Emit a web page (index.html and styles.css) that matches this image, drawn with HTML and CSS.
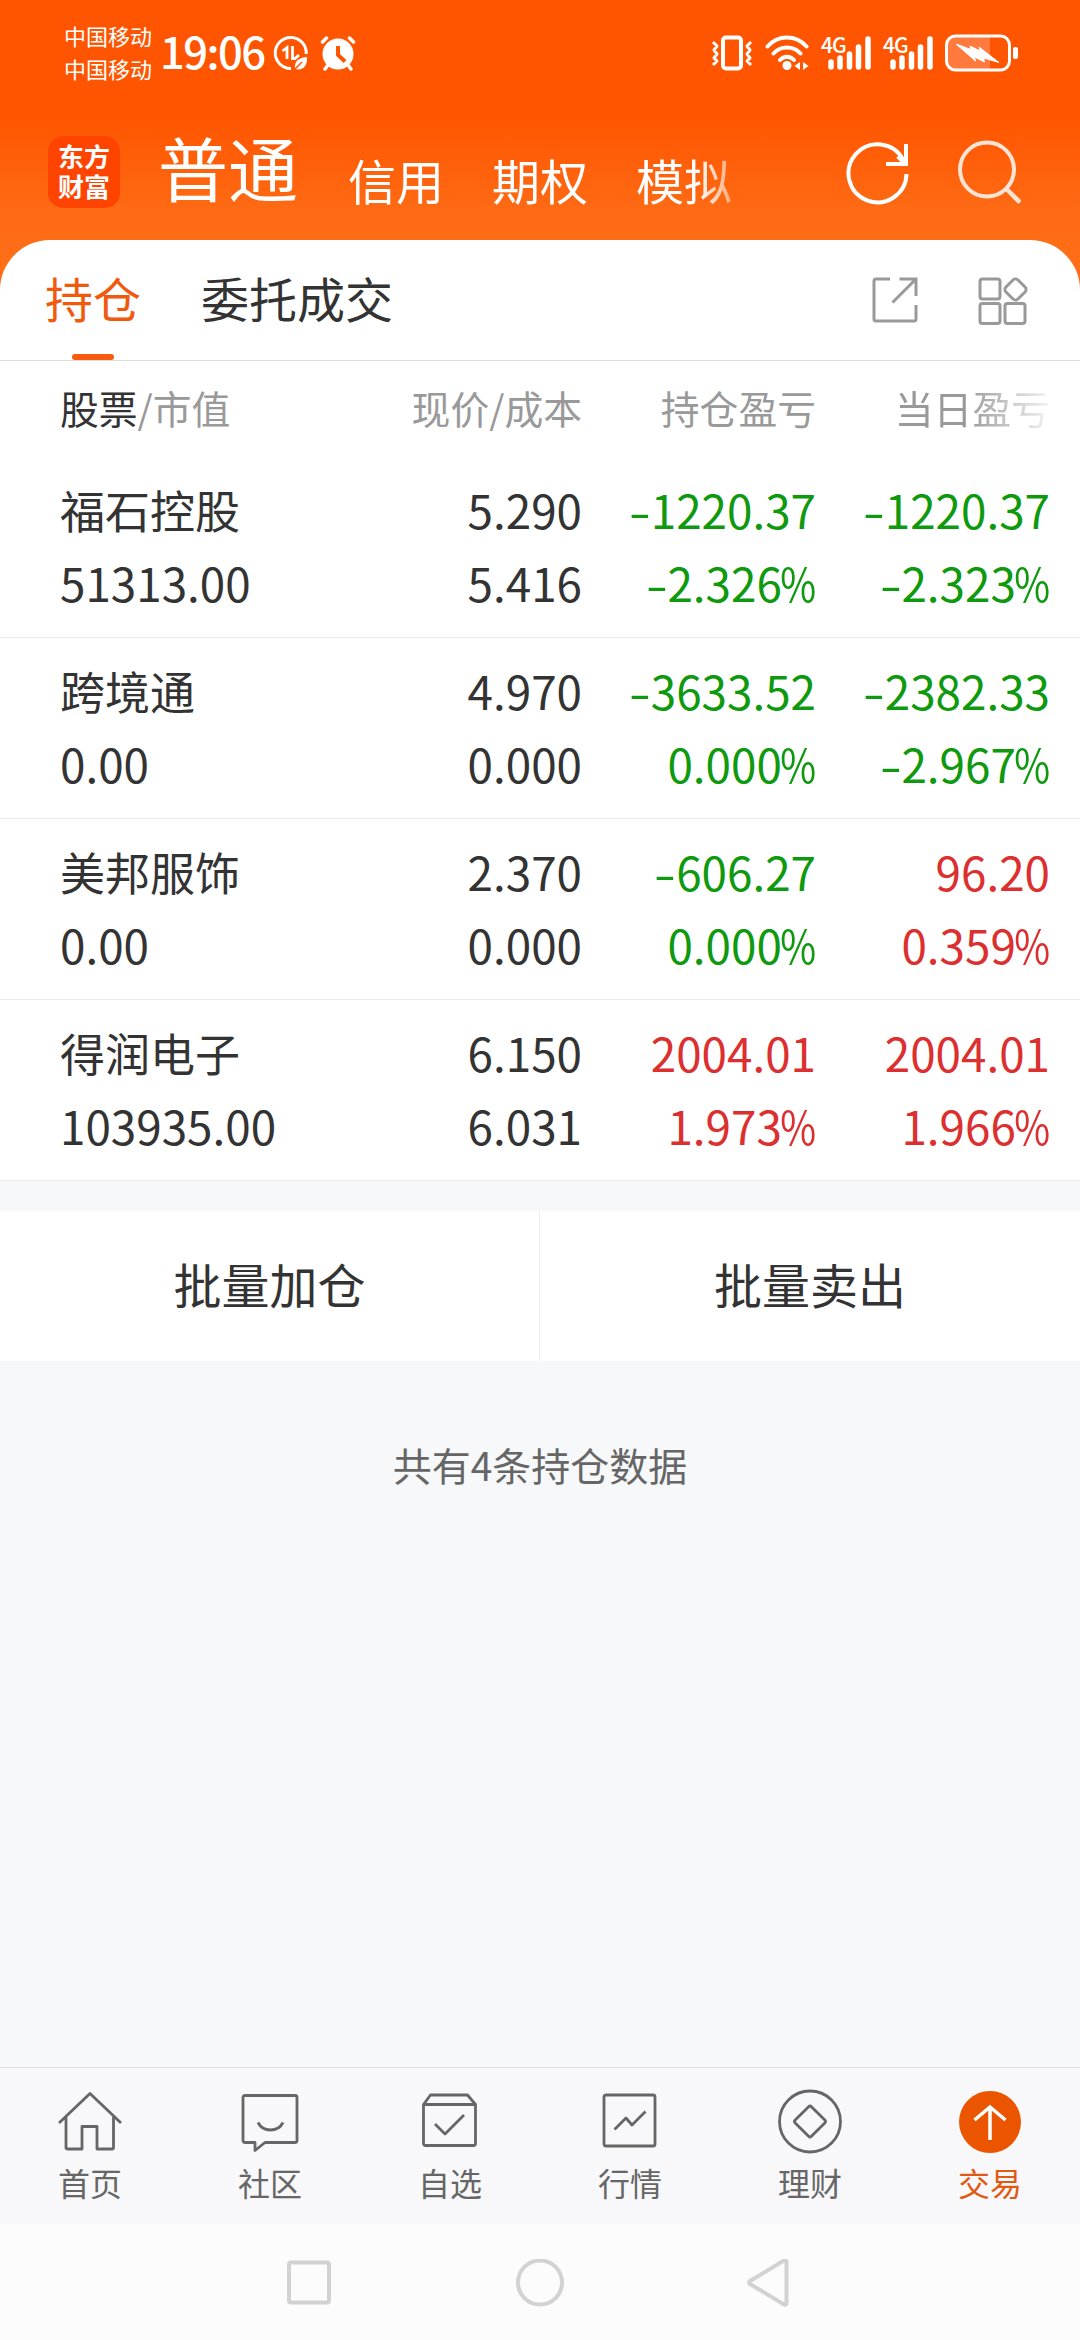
FILE: index.html
```html
<!DOCTYPE html>
<html lang="zh-CN">
<head>
    <meta charset="UTF-8">
    <meta name="viewport" content="width=device-width, initial-scale=1.0">
    <title>交易 - 持仓</title>
    <link rel="stylesheet" href="styles.css">
</head>
<body>
    <header class="top">
        <!-- 状态栏 -->
        <div class="status">
            <div class="carrier">
                <span>中国移动</span>
                <span>中国移动</span>
            </div>
            <span class="time">19:06</span>
            <svg class="s-data" width="36" height="36" viewBox="0 0 36 36" fill="none" stroke="#fff">
                <path d="M18 33.500A15.500 15.500 0 1 1 33.200 19" stroke-width="3"/>
                <path d="M9.500 16l4.500-3.500V24M19.500 11v12.500h2.500L26 20" stroke-width="2.800"/>
                <path d="M22 34c-1-8 4-11.500 12-12 .5 9-4 14-12 12z" fill="#fff" stroke="none"/>
                <path d="M21 35l8-8" stroke="#ff5500" stroke-width="1.500"/>
            </svg>
            <svg class="s-alarm" width="36" height="36" viewBox="0 0 36 36" fill="none" stroke="#fff" stroke-width="4" stroke-linecap="round">
                <circle cx="18" cy="19" r="15.500" fill="#fff" stroke="none"/>
                <path d="M2.500 7l4-4M33.500 7l-4-4M8 30l-3 4M28 30l3 4" stroke-width="3.500"/>
                <path d="M18 11v9l7 6.500" stroke="#ff5500" stroke-linecap="butt"/>
            </svg>
            <div class="status-right">
                <svg width="42" height="36" viewBox="0 0 42 36" fill="none" stroke="#fff" stroke-linejoin="round">
                    <rect x="12" y="2.500" width="18" height="31" rx="3" stroke-width="4"/>
                    <path d="M2 7l4 4-3 4 3 4-3 4 3 3-4 4M40 7l-4 4 3 4-3 4 3 4-3 3 4 4" stroke-width="3"/>
                </svg>
                <svg width="44" height="36" viewBox="0 0 44 36" fill="none" stroke="#fff" stroke-width="4" stroke-linecap="round">
                    <path d="M2.500 11.500C13-.500 31-.500 41.500 11.500M8.500 18.500c7-8 20-8 27 0M15 25c4-4.500 10-4.500 14 0"/>
                    <circle cx="22" cy="30.500" r="4.500" fill="#fff" stroke="none"/>
                    <path d="M35 27v8l-5.500-4zM38 27v8l5.500-4z" fill="#fff" stroke="none"/>
                </svg>
                <div class="signal">
                    <span>4G</span>
                    <svg width="50" height="36" viewBox="0 0 50 36" stroke="#fff" stroke-width="5.500" stroke-linecap="round">
                        <path d="M10 27v5M19 23v9M28.500 19v13M37.500 12v20M47 4v28"/>
                    </svg>
                </div>
                <div class="signal">
                    <span>4G</span>
                    <svg width="50" height="36" viewBox="0 0 50 36" stroke="#fff" stroke-width="5.500" stroke-linecap="round">
                        <path d="M10 27v5M19 23v9M28.500 19v13M37.500 12v20M47 4v28"/>
                    </svg>
                </div>
                <svg width="74" height="38" viewBox="0 0 74 38">
                    <path d="M9 3h36v32H9a6 6 0 0 1-6-6V9a6 6 0 0 1 6-6z" fill="#ff7a3c"/>
                    <rect x="1.500" y="2" width="63" height="34" rx="9" fill="none" stroke="#fff" stroke-width="3"/>
                    <path d="M11 10l15 5.500-1-3.500 10 5-1-4 20 15.500-15.500-4.500 1 4-10-5 1 4z" fill="#fff" stroke="#fff" stroke-linejoin="round"/>
                    <rect x="68" y="13" width="5" height="12" rx="2" fill="#fff"/>
                </svg>
            </div>
        </div>

        <!-- 账户切换 -->
        <div class="accounts">
            <div class="logo"><span>东方</span><span>财富</span></div>
            <div class="account-list">
                <span class="current">普通</span>
                <span>信用</span>
                <span>期权</span>
                <span>模拟</span>
            </div>
            <svg class="refresh" width="64" height="66" viewBox="0 0 64 66" fill="none" stroke="#fff" stroke-width="4">
                <path d="M60.500 34A29 29 0 1 1 57 19.500"/>
                <path d="M60 4v20H40" />
                <path d="M52 16l8 8" stroke-width="5"/>
            </svg>
            <svg class="search" width="64" height="66" viewBox="0 0 64 66" fill="none" stroke="#ffe4d4" stroke-width="4">
                <circle cx="30" cy="29.500" r="27"/>
                <path d="M49 48.500l14 14" stroke-width="4.500"/>
            </svg>
        </div>
    </header>

    <main class="panel">
        <nav class="tabs">
            <span class="tab active">持仓</span>
            <span class="tab">委托成交</span>
            <svg class="share" width="46" height="46" viewBox="0 0 46 46" fill="none" stroke="#999" stroke-width="3">
                <path d="M18 2H4a2 2 0 0 0-2 2v38a2 2 0 0 0 2 2h38a2 2 0 0 0 2-2V28M27.500 2H44v17M43 3L20.500 25.500"/>
            </svg>
            <svg class="grid" width="50" height="50" viewBox="0 0 50 50" fill="none" stroke="#999" stroke-width="3">
                <rect x="2" y="3" width="20" height="20" rx="2.500"/>
                <rect x="2" y="27.500" width="20" height="20" rx="2.500"/>
                <rect x="27" y="27.500" width="20" height="20" rx="2.500"/>
                <rect x="29" y="5" width="17" height="17" rx="3.500" transform="rotate(45 37.500 13.500)"/>
            </svg>
        </nav>

        <div class="row head">
            <span><b>股票</b>/市值</span>
            <span>现价/成本</span>
            <span>持仓盈亏</span>
            <span class="fade">当日盈亏</span>
        </div>

        <!-- 持仓列表 -->
        <div class="row stock">
            <div><p class="name">福石控股</p><p>51313.00</p></div>
            <div><p>5.290</p><p>5.416</p></div>
            <div class="down"><p><i>-</i>1220.37</p><p><i>-</i>2.326<em>%</em></p></div>
            <div class="down"><p><i>-</i>1220.37</p><p><i>-</i>2.323<em>%</em></p></div>
        </div>
        <div class="row stock">
            <div><p class="name">跨境通</p><p>0.00</p></div>
            <div><p>4.970</p><p>0.000</p></div>
            <div class="down"><p><i>-</i>3633.52</p><p>0.000<em>%</em></p></div>
            <div class="down"><p><i>-</i>2382.33</p><p><i>-</i>2.967<em>%</em></p></div>
        </div>
        <div class="row stock">
            <div><p class="name">美邦服饰</p><p>0.00</p></div>
            <div><p>2.370</p><p>0.000</p></div>
            <div class="down"><p><i>-</i>606.27</p><p>0.000<em>%</em></p></div>
            <div class="up"><p>96.20</p><p>0.359<em>%</em></p></div>
        </div>
        <div class="row stock">
            <div><p class="name">得润电子</p><p>103935.00</p></div>
            <div><p>6.150</p><p>6.031</p></div>
            <div class="up"><p>2004.01</p><p>1.973<em>%</em></p></div>
            <div class="up"><p>2004.01</p><p>1.966<em>%</em></p></div>
        </div>
    </main>

    <div class="batch">
        <div class="batch-btn">批量加仓</div>
        <div class="batch-btn">批量卖出</div>
    </div>
    <p class="total">共有4条持仓数据</p>

    <!-- 底部导航 -->
    <nav class="tabbar">
        <div class="item">
            <svg viewBox="0 0 64 64"><path d="M1 34L32 4.500 63 34M8 28v31a1.500 1.500 0 0 0 1.500 1H24V37.500h15V60h15.500a1.500 1.500 0 0 0 1-1V28"/></svg>
            <span>首页</span>
        </div>
        <div class="item">
            <svg viewBox="0 0 64 64"><path d="M7 6.500h50a2 2 0 0 1 2 2v43a2 2 0 0 1-2 2H27L17 61.500v-8H7a2 2 0 0 1-2-2v-43a2 2 0 0 1 2-2zM20 33.500c5 10 20 10 25 0"/></svg>
            <span>社区</span>
        </div>
        <div class="item">
            <svg viewBox="0 0 64 64"><path d="M5.500 15.500l7-9.500h37l8 9.500v39a2 2 0 0 1-2 2h-48a2 2 0 0 1-2-2zh52M17 35l10 10 19-19"/></svg>
            <span>自选</span>
        </div>
        <div class="item">
            <svg viewBox="0 0 64 64"><rect x="6" y="6" width="51" height="51" rx="2"/><path d="M16.500 40.500L28 29l6 7 13.500-13.500"/></svg>
            <span>行情</span>
        </div>
        <div class="item">
            <svg viewBox="0 0 64 64"><circle cx="32" cy="32.500" r="30.500"/><rect x="20.500" y="21" width="23" height="23" rx="2" transform="rotate(45 32 32.500)"/></svg>
            <span>理财</span>
        </div>
        <div class="item on">
            <svg viewBox="0 0 64 64"><circle cx="32" cy="33" r="31"/><path d="M32 51V18M16.500 31L32 18l15.500 13"/></svg>
            <span>交易</span>
        </div>
    </nav>

    <!-- 系统按键 -->
    <div class="sysnav">
        <svg width="50" height="50" viewBox="0 0 50 50"><rect x="5" y="3.500" width="40" height="40" rx="2"/></svg>
        <svg width="50" height="50" viewBox="0 0 50 50"><circle cx="25" cy="23.500" r="22"/></svg>
        <svg width="50" height="50" viewBox="0 0 50 50"><path d="M4 22l34-20.500q2.500-1 2.500 1.500v41q0 2.500-2.500 1.500L4 25q-2-1.500 0-3z"/></svg>
    </div>
</body>
</html>
```

FILE: styles.css
```css
* {
    box-sizing: border-box;
}
body {
    margin: 0;
    width: 1080px;
    height: 2340px;
    display: flex;
    flex-direction: column;
    background-color: #f7f8fa;
    color: #333;
    font-family: 'Noto Sans CJK SC', sans-serif;
    overflow: hidden;
}
p {
    margin: 0;
}
svg {
    display: block;
    flex: none;
}

/* 顶部 */
.top {
    height: 300px;
    flex: none;
    background: linear-gradient(#ff5500 0, #ff5500 118px, #ff6a14 210px, #ff7019 300px);
    color: #fff;
}
.status {
    display: flex;
    height: 106px;
    padding: 0 61px 0 64px;
    align-items: center;
}
.carrier {
    display: flex;
    flex-direction: column;
    width: 96px;
    margin-top: -3px;
    font-size: 22px;
    line-height: 33px;
}
.time {
    width: 113px;
    font-size: 43.500px;
    line-height: 60px;
    font-weight: 500;
    letter-spacing: -1.500px;
    margin-top: -4px;
}
.s-alarm {
    margin-left: 11px;
}
.status-right {
    display: flex;
    align-items: center;
    gap: 12px;
    margin-left: auto;
}
.signal {
    position: relative;
}
.signal span {
    position: absolute;
    left: 0;
    top: -3px;
    font-size: 21px;
    line-height: 24px;
    font-weight: 500;
    letter-spacing: -1px;
}
.accounts {
    display: flex;
    height: 134px;
    padding-left: 48px;
}
.logo {
    width: 72px;
    height: 72px;
    margin-top: 30px;
    padding-top: 5px;
    border-radius: 15px;
    background-color: #ff4400;
    display: flex;
    flex-direction: column;
    align-items: center;
    font-size: 26px;
    line-height: 30px;
    font-weight: 700;
}
.account-list {
    display: flex;
    align-items: flex-start;
    gap: 48px;
    width: 612px;
    margin-left: 38px;
    font-size: 48px;
    line-height: 146px;
    white-space: nowrap;
    -webkit-mask-image: linear-gradient(to right, #000 540px, transparent 600px);
    mask-image: linear-gradient(to right, #000 540px, transparent 600px);
}
.account-list .current {
    margin-right: 2px;
    font-size: 70px;
    line-height: 122px;
}
.refresh {
    margin: 34px 0 0 76px;
}
.search {
    margin: 34px 0 0 47px;
}

/* 持仓面板 */
.panel {
    margin-top: -60px;
    background-color: #fff;
    border-radius: 50px 50px 0 0;
}
.tabs {
    display: flex;
    height: 121px;
    padding: 0 52px 0 45px;
    border-bottom: 1px solid #ddd;
}
.tab {
    position: relative;
    margin-right: 60px;
    font-size: 48px;
    line-height: 114px;
}
.tab.active {
    color: #f05a0e;
}
.tab.active::after {
    content: "";
    position: absolute;
    left: 27px;
    bottom: 0;
    width: 42px;
    height: 6px;
    border-radius: 3px;
    background-color: #f95b0e;
}
.share {
    margin: 37px 60px 0 auto;
}
.grid {
    margin-top: 36px;
}
.row {
    display: grid;
    grid-template-columns: 300px 222px 234px 234px;
    padding-left: 60px;
}
.row > * {
    text-align: right;
}
.row > :first-child {
    text-align: left;
}
.head {
    height: 96px;
    font-size: 38.800px;
    line-height: 92px;
    color: #999;
}
.head b {
    font-weight: 400;
    color: #333;
}
.head .fade {
    -webkit-mask-image: linear-gradient(to right, #000 150px, transparent 244px);
    mask-image: linear-gradient(to right, #000 150px, transparent 244px);
}
.stock {
    height: 181px;
    padding-top: 16px;
    border-bottom: 1px solid #ececec;
    font-size: 45.800px;
    line-height: 73px;
}
.stock .name {
    font-size: 45px;
}
/* 加宽的负号 */
.stock i {
    display: inline-block;
    font-style: normal;
    margin-right: 3px;
    transform: scaleX(1.400);
}
/* 收窄的百分号 */
.stock em {
    display: inline-block;
    font-style: normal;
    margin-left: -8px;
    transform: scaleX(0.850);
    transform-origin: right;
}
.down {
    color: #0f990f;
}
.up {
    color: #dc2f2f;
}

.batch {
    display: flex;
    flex: none;
    height: 150px;
    margin-top: 30px;
    background-color: #fff;
}
.batch-btn {
    width: 540px;
    font-size: 48px;
    line-height: 145px;
    text-align: center;
}
.batch-btn:first-child {
    border-right: 1px solid #eee;
}
.total {
    margin-top: 75px;
    font-size: 39px;
    line-height: 56px;
    text-align: center;
    color: #666;
}

/* 底部 */
.tabbar {
    display: flex;
    flex: none;
    height: 157px;
    margin-top: auto;
    border-top: 1px solid #ddd;
    background-color: #f8f8fa;
    color: #666;
}
.item {
    width: 180px;
    padding-top: 21px;
    display: flex;
    flex-direction: column;
    align-items: center;
    font-size: 32px;
    line-height: 58px;
}
.item svg {
    width: 64px;
    height: 64px;
    fill: none;
    stroke: #666;
    stroke-width: 2.800;
    stroke-linejoin: round;
    overflow: visible;
}
.item.on {
    color: #e05a14;
}
.item.on circle {
    fill: #eb5500;
    stroke: none;
}
.item.on path {
    stroke: #fff;
    stroke-width: 3.500;
    stroke-linejoin: miter;
}
.sysnav {
    display: flex;
    flex: none;
    justify-content: center;
    gap: 181px;
    height: 116px;
    padding-top: 35px;
    background-color: #fcfcfc;
}
.sysnav svg {
    fill: none;
    stroke: #d2d2d2;
    stroke-width: 4;
}
```
